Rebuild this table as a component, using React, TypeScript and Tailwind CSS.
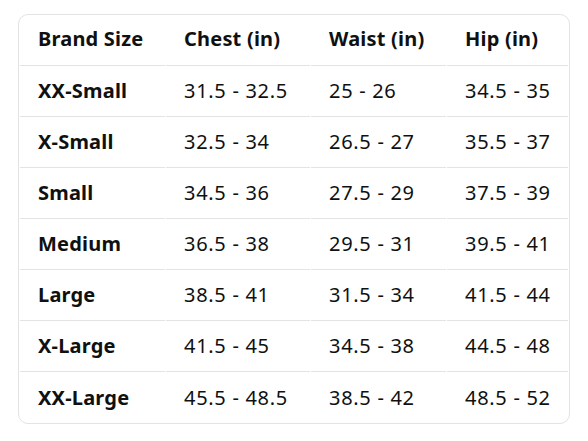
const rows = [
  ['XX-Small', '31.5 - 32.5', '25 - 26', '34.5 - 35'],
  ['X-Small', '32.5 - 34', '26.5 - 27', '35.5 - 37'],
  ['Small', '34.5 - 36', '27.5 - 29', '37.5 - 39'],
  ['Medium', '36.5 - 38', '29.5 - 31', '39.5 - 41'],
  ['Large', '38.5 - 41', '31.5 - 34', '41.5 - 44'],
  ['X-Large', '41.5 - 45', '34.5 - 38', '44.5 - 48'],
  ['XX-Large', '45.5 - 48.5', '38.5 - 42', '48.5 - 52'],
]

const headers = ['Brand Size', 'Chest (in)', 'Waist (in)', 'Hip (in)']

export default function App() {
  return (
    <div className="w-[588px] h-[441px] bg-white pt-[14px] pl-[18px] font-['Noto_Sans',sans-serif] text-[#0f1111]">
      <div className="w-[552px] border border-[#e3e3e3] rounded-[10px] overflow-hidden">
        <table className="w-full border-separate border-spacing-x-px border-spacing-y-0 table-fixed text-[20px] leading-none">
          <colgroup>
            <col className="w-[145px]" />
            <col className="w-[144px]" />
            <col className="w-[135px]" />
            <col />
          </colgroup>
          <thead>
            <tr>
              {headers.map(h => (
                <th key={h} className="h-[51px] text-left font-bold pl-[18px] pb-[2px] tracking-[0.01em] border-b border-[#e3e3e3]">
                  {h}
                </th>
              ))}
            </tr>
          </thead>
          <tbody>
            {rows.map((row, i) => (
              <tr key={row[0]}>
                {row.map((cell, j) => (
                  <td
                    key={j}
                    className={`h-[51px] pl-[18px] ${j === 0 ? 'font-bold tracking-[0.01em]' : 'font-normal tracking-[0.035em]'} ${i < rows.length - 1 ? 'border-b border-[#e3e3e3]' : ''}`}
                  >
                    {cell}
                  </td>
                ))}
              </tr>
            ))}
          </tbody>
        </table>
      </div>
    </div>
  )
}
